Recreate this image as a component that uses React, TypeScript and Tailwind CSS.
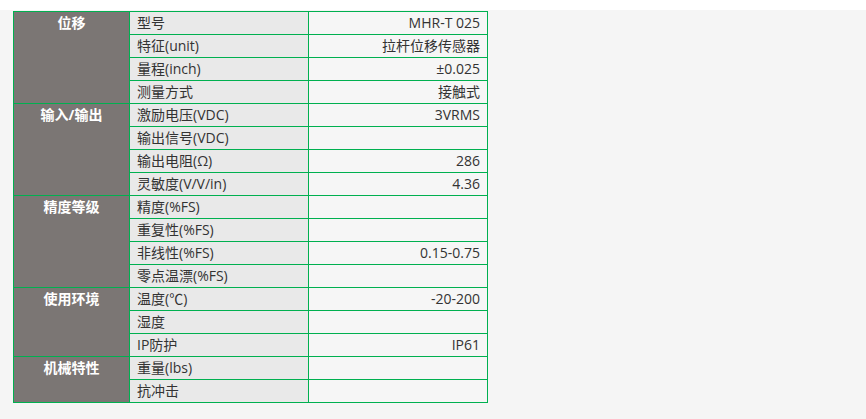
import React from "react";

type Group = { name: string; span: string; rows: [string, string][] };

const groups: Group[] = [
  {
    name: "位移",
    span: "row-span-4",
    rows: [
      ["型号", "MHR-T 025"],
      ["特征(unit)", "拉杆位移传感器"],
      ["量程(inch)", "±0.025"],
      ["测量方式", "接触式"],
    ],
  },
  {
    name: "输入/输出",
    span: "row-span-4",
    rows: [
      ["激励电压(VDC)", "3VRMS"],
      ["输出信号(VDC)", ""],
      ["输出电阻(Ω)", "286"],
      ["灵敏度(V/V/in)", "4.36"],
    ],
  },
  {
    name: "精度等级",
    span: "row-span-4",
    rows: [
      ["精度(%FS)", ""],
      ["重复性(%FS)", ""],
      ["非线性(%FS)", "0.15-0.75"],
      ["零点温漂(%FS)", ""],
    ],
  },
  {
    name: "使用环境",
    span: "row-span-3",
    rows: [
      ["温度(℃)", "-20-200"],
      ["湿度", ""],
      ["IP防护", "IP61"],
    ],
  },
  {
    name: "机械特性",
    span: "row-span-2",
    rows: [
      ["重量(lbs)", ""],
      ["抗冲击", ""],
    ],
  },
];

export default function App() {
  return (
    <div className="w-[866px] h-[419px] bg-white overflow-hidden font-['Open_Sans','Noto_Sans_CJK_SC',sans-serif]">
      <div className="mt-[10px] h-[409px] bg-[#f5f5f5] pl-[13px]">
        <div className="inline-grid grid-cols-[115px_178px_178px] auto-rows-[22px] gap-px p-px bg-[#00b050] text-[14px] text-[#333]">
          {groups.map((g, gi) => (
            <React.Fragment key={gi}>
              <div
                className={`${g.span} col-start-1 bg-[#7b7674] text-white font-bold text-center leading-[22px]`}
              >
                {g.name}
              </div>
              {g.rows.map((row, ri) => (
                <React.Fragment key={ri}>
                  <div className="col-start-2 bg-[#e9e9e9] pl-[7px] leading-[22px] whitespace-nowrap">
                    {row[0]}
                  </div>
                  <div className="col-start-3 bg-[#f6f6f6] pr-[7px] text-right leading-[22px] whitespace-nowrap">
                    {row[1]}
                  </div>
                </React.Fragment>
              ))}
            </React.Fragment>
          ))}
        </div>
      </div>
    </div>
  );
}
